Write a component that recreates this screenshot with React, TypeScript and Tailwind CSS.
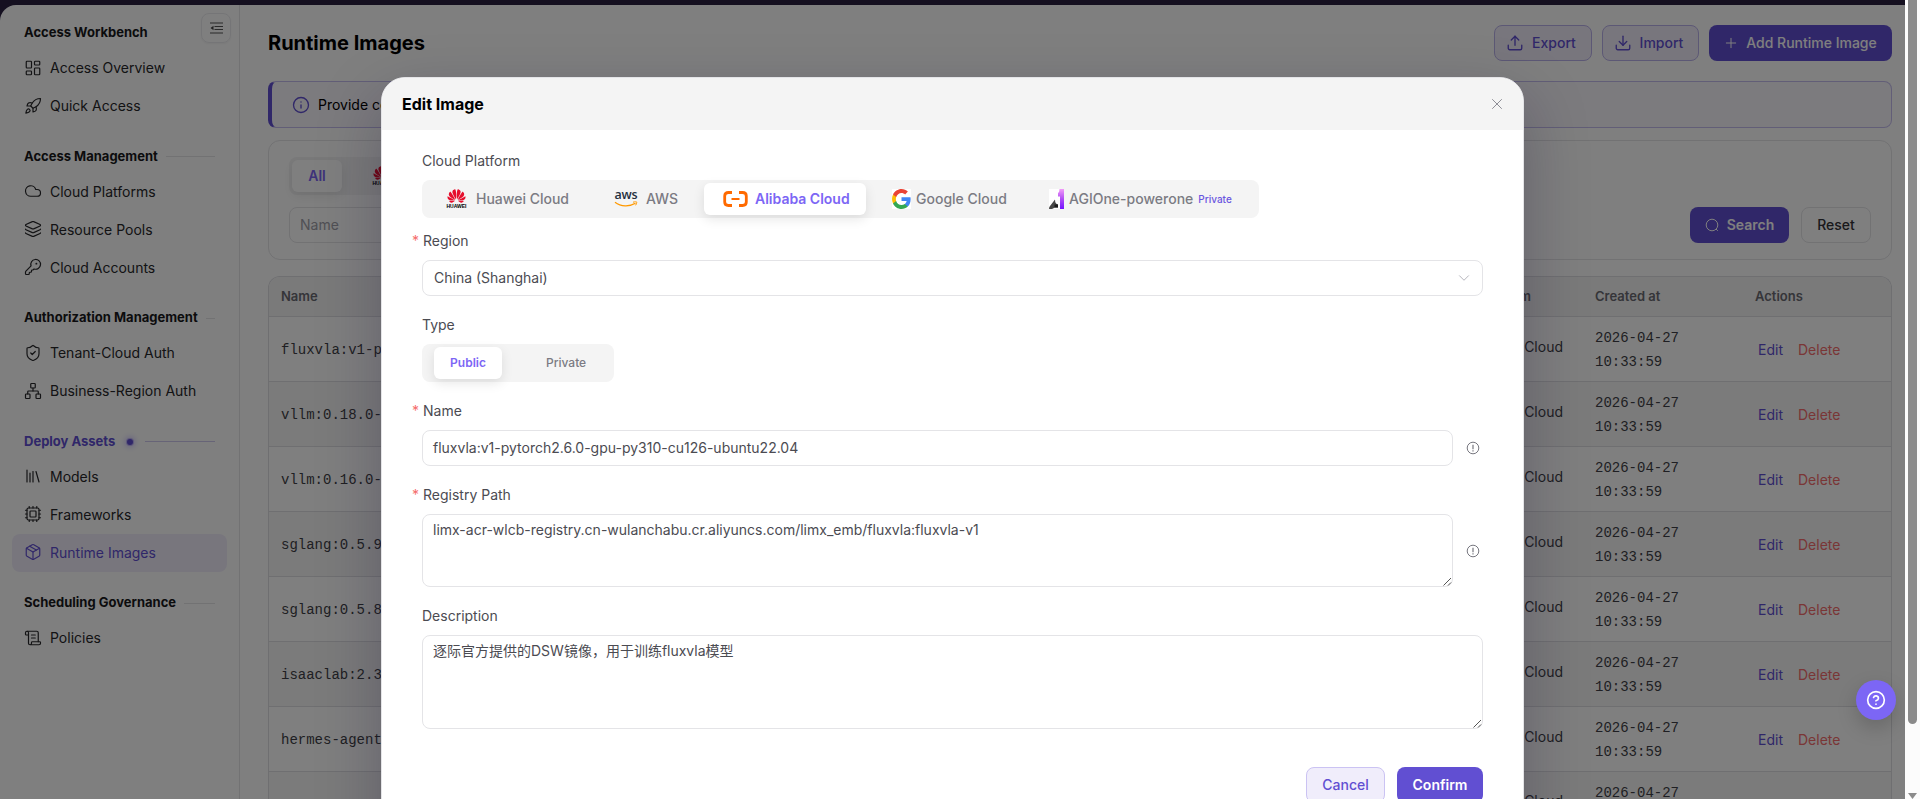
import React from "react";
import {
  LayoutDashboard, Rocket, Cloud, Layers, KeyRound, ShieldCheck, Network, Library, Cpu, Package, ScrollText,
  Upload, Download, Plus, Info, X, ChevronDown, CircleQuestionMark,
} from "lucide-react";
import { SiHuawei } from "react-icons/si";

type Item = { label: string; icon: React.ElementType; active?: boolean };
type Group = { title: string; active?: boolean; items: Item[] };

const groups: Group[] = [
  { title: "Access Workbench", items: [{ label: "Access Overview", icon: LayoutDashboard }, { label: "Quick Access", icon: Rocket }] },
  { title: "Access Management", items: [{ label: "Cloud Platforms", icon: Cloud }, { label: "Resource Pools", icon: Layers }, { label: "Cloud Accounts", icon: KeyRound }] },
  { title: "Authorization Management", items: [{ label: "Tenant-Cloud Auth", icon: ShieldCheck }, { label: "Business-Region Auth", icon: Network }] },
  { title: "Deploy Assets", active: true, items: [{ label: "Models", icon: Library }, { label: "Frameworks", icon: Cpu }, { label: "Runtime Images", icon: Package, active: true }] },
  { title: "Scheduling Governance", items: [{ label: "Policies", icon: ScrollText }] },
];

const names = ["fluxvla:v1-p", "vllm:0.18.0-", "vllm:0.16.0-", "sglang:0.5.9", "sglang:0.5.8", "isaaclab:2.3", "hermes-agent"];

function HuaweiLogo() {
  return (
    <span className="flex h-5 w-[19px] shrink-0 flex-col items-center">
      <SiHuawei className="-mt-0.5 h-[18px] w-[19px] text-[#e60f2d]" />
      <span className="-mt-px font-['Liberation_Sans'] text-[5px] leading-[5px] font-bold text-black">HUAWEI</span>
    </span>
  );
}

function AwsLogo() {
  return (
    <span className="flex h-5 w-6 shrink-0 flex-col items-center">
      <span className="font-['Open_Sans'] text-[12.5px] leading-[12px] font-semibold tracking-[-0.2px] text-[#252f3e]">aws</span>
      <svg viewBox="0 0 24 6" className="h-1.5 w-6" fill="none" stroke="#ff9900" strokeWidth="1.3">
        <path d="M1 1.2C7 5.8 15.500 5.800 21.500 2.200" />
        <path d="M19 1.200c2-.6 4-.5 3.800.1-.1.9-.5 2-1.200 3" strokeWidth="1" />
      </svg>
    </span>
  );
}

function AlibabaLogo() {
  return (
    <svg viewBox="0 0 25 16" className="h-4 w-[25px] shrink-0" fill="none" stroke="#ff6a00">
      <path d="M9 1.500H5.500Q1.700 1.500 1.700 5V11Q1.700 14.500 5.500 14.500H9" strokeWidth="2.800" />
      <path d="M16 1.500H19.500Q23.300 1.500 23.300 5V11Q23.300 14.500 19.500 14.500H16" strokeWidth="2.800" />
      <path d="M8.500 8H16.500" strokeWidth="2" />
    </svg>
  );
}

function GoogleLogo() {
  return (
    <span className="h-5 w-[19px] shrink-0 bg-white">
      <svg viewBox="1 1 22 22" preserveAspectRatio="none" className="h-5 w-[19px]">
        <path fill="#4285F4" d="M22.560 12.250c0-.78-.07-1.530-.2-2.250H12v4.260h5.920c-.26 1.370-1.040 2.530-2.210 3.310v2.770h3.570c2.080-1.920 3.280-4.740 3.280-8.090z" />
        <path fill="#34A853" d="M12 23c2.970 0 5.460-.98 7.280-2.660l-3.570-2.770c-.98.66-2.230 1.060-3.710 1.060-2.860 0-5.290-1.930-6.160-4.530H2.180v2.840C3.990 20.530 7.700 23 12 23z" />
        <path fill="#FBBC05" d="M5.840 14.090c-.22-.66-.35-1.360-.35-2.090s.13-1.430.35-2.090V7.070H2.180C1.430 8.550 1 10.220 1 12s.43 3.450 1.180 4.930l3.660-2.840z" />
        <path fill="#EA4335" d="M12 5.380c1.620 0 3.060.56 4.210 1.640l3.150-3.150C17.450 2.090 14.970 1 12 1 7.700 1 3.990 3.470 2.180 7.070l3.660 2.840c.87-2.600 3.300-4.530 6.160-4.530z" />
      </svg>
    </span>
  );
}

function AgiLogo() {
  return (
    <span className="h-5 w-[15px] shrink-0 bg-white">
      <svg viewBox="0 0 15 20" className="h-5 w-[15px]">
        <defs>
          <linearGradient id="one" x1="0" y1="0" x2="0" y2="1">
            <stop offset="0" stopColor="#f29bf8" />
            <stop offset=".5" stopColor="#b04bf5" />
            <stop offset="1" stopColor="#7414ff" />
          </linearGradient>
        </defs>
        <path d="M10.500 0H15V20H11V7.500H9V4Q10.500 3 10.500 0Z" fill="url(#one)" />
        <path d="M0 20Q0 18 1 17L6 10.500Q6 15 9 15.500V18.500H6L3 20Z" fill="#484848" />
        <path d="M5.500 15.500H9V18.500H5.500Z" fill="#1c1c1c" />
      </svg>
    </span>
  );
}

function FoldIcon() {
  return (
    <svg viewBox="0 0 13 12" className="h-3 w-[13px]" fill="none" stroke="#555" strokeWidth="1.500">
      <path d="M0 1H13M4.500 4.500H13M4.500 7.500H13M0 11H13" strokeWidth="1.200" />
      <path d="M3.500 3.800V8.200L.5 6Z" fill="#444" stroke="none" />
    </svg>
  );
}

function HintIcon() {
  return (
    <svg viewBox="0 0 14 14" className="h-3.5 w-3.5 shrink-0" fill="none" stroke="#77777f">
      <circle cx="7" cy="7" r="5.800" />
      <path d="M7 3.800V8.200M7 9.300V10.500" strokeWidth="1.200" />
    </svg>
  );
}

function Sidebar() {
  return (
    <aside className="relative w-60 shrink-0 border-r border-[#e4e4e7] px-3 pt-[18px]">
      <button className="absolute top-2 right-2 flex h-[30px] w-[30px] items-center justify-center rounded-lg border border-[#ebebee] shadow-xs">
        <FoldIcon />
      </button>
      {groups.map((g, i) => (
        <section key={g.title} className="mb-[21.500px]">
          <div className="flex h-5 items-center pr-3 pl-3">
            <h3 className={`text-[13px] font-bold whitespace-nowrap ${g.active ? "text-[#614fd2]" : "text-[#18181b]"}`}>{g.title}</h3>
            {g.active && <span className="ml-3 h-1.5 w-1.5 rounded-full bg-[#614fd2] shadow-[0_0_0_1px_#bdb3f5,0_0_6px_2px_#c9c0ff]" />}
            {i > 0 && <span className={`h-px flex-1 ${g.active ? "ml-3 bg-[#cfc8ef]" : "ml-2 bg-[#e4e4e7]"}`} />}
          </div>
          <div className="mt-1.5">
            {g.items.map(({ label, icon: Icon, active }) => (
              <a key={label} className={`flex h-[38px] items-center gap-2 rounded-lg px-3 text-sm whitespace-nowrap ${active ? "bg-[#f0edfb] text-[#614fd2]" : "text-[#27272a]"}`}>
                <Icon className="-mt-px h-[18px] w-[18px]" strokeWidth={1.6} />
                <span>{label}</span>
              </a>
            ))}
          </div>
        </section>
      ))}
    </aside>
  );
}

const outline = "flex h-9 items-center gap-2 rounded-lg border bg-[#f0edfb] text-sm font-medium text-[#614fd2]";
const solid = "flex h-9 items-center rounded-lg bg-[#614fd2] text-sm text-white";

function Main() {
  return (
    <main className="flex min-w-0 flex-1 flex-col pr-[13px] pl-7">
      <div className="mt-5 flex h-9 items-center gap-2.5">
        <h1 className="flex-1 text-xl font-bold text-black">Runtime Images</h1>
        <button className={`${outline} w-[98px] justify-center border-[#b9b0ea] pr-1`}><Upload className="h-[18px] w-[18px]" strokeWidth={1.8} />Export</button>
        <button className={`${outline} w-[97px] justify-center border-[#b9b0ea] pr-1`}><Download className="h-[18px] w-[18px]" strokeWidth={1.8} />Import</button>
        <button className={`${solid} w-[183px] justify-center gap-[7px] pr-px font-medium`}><Plus className="h-4 w-4" strokeWidth={1.5} />Add Runtime Image</button>
      </div>
      <div className="mt-5 flex h-[47px] shrink-0 items-center gap-2 rounded-lg border border-l-4 border-[#c5bdee] border-l-[#614fd2] bg-[#f8f7fd] pl-5 text-sm text-black">
        <Info className="h-[18px] w-[18px] text-[#614fd2]" strokeWidth={1.8} />
        <span className="whitespace-nowrap">Provide co</span>
      </div>
      <div className="mt-3 h-[120px] shrink-0 rounded-xl border border-[#e4e4e7] px-5 pt-4">
        <div className="flex h-[38px] w-[700px] items-center rounded-lg bg-[#f4f4f5] px-[3px]">
          <span className="flex h-8 w-[50px] items-center justify-center rounded-md bg-white text-sm font-semibold text-[#7c66f5] shadow-[0_4px_12px_rgba(0,0,0,0.08)]">All</span>
          <span className="ml-[31px]"><HuaweiLogo /></span>
        </div>
        <div className="mt-3 flex items-center justify-between">
          <div className="flex h-9 w-60 items-center rounded-lg border border-[#e4e4e7] px-2.5 text-sm text-[#a1a1aa]">Name</div>
          <div className="flex gap-3">
            <button className={`${solid} w-[99px] justify-center gap-2 font-semibold`}>
              <svg viewBox="0 0 14 14" className="h-3.5 w-3.5" fill="none" stroke="currentColor"><circle cx="7" cy="7" r="5.800" /><path d="m11 11 1.800 1.800" /></svg>
              Search
            </button>
            <button className="flex h-9 w-[70px] items-center justify-center rounded-lg border border-[#e4e4e7] text-sm font-medium text-[#333338]">Reset</button>
          </div>
        </div>
      </div>
      <div className="mt-4 min-h-0 flex-1 overflow-hidden rounded-t-xl border border-b-0 border-[#dedee2]">
        <div className="flex h-10 items-center border-b border-[#dedee2] bg-[#f4f4f5] text-[13px] font-semibold text-[#6b6b73]">
          <span className="w-[1100px] pl-3">Name</span>
          <span className="w-[162px] text-right">Cloud Platform</span>
          <span className="w-[160px] pl-[64px] whitespace-nowrap">Created at</span>
          <span className="pl-[64px]">Actions</span>
        </div>
        {names.map((n, i) => (
          <div key={n} className={`flex h-[65px] items-center border-b border-[#dedee2] text-sm ${i % 2 ? "bg-[#f6f6f7]" : ""}`}>
            <span className="w-[1100px] pt-0.5 pl-3 font-['Liberation_Mono',monospace] text-[#3f3f46]">{n}</span>
            <span className="w-[194px] pb-1 text-right text-[#3f3f46]">Alibaba Cloud</span>
            <span className="w-[128px] pt-px pl-8 font-['Liberation_Mono',monospace] leading-6 text-[#3f3f46]">2026-04-27 10:33:59</span>
            <span className="flex gap-[15px] pt-0.5 pl-[67px]">
              <a className="text-[#614fd2]">Edit</a>
              <a className="text-[#f56c6c]">Delete</a>
            </span>
          </div>
        ))}
        <div className="flex h-[65px] bg-[#f6f6f7] pt-[9px] text-sm text-[#3f3f46]">
          <span className="w-[1294px] pt-2.5 text-right">Alibaba Cloud</span>
          <span className="pl-8 font-['Liberation_Mono',monospace] leading-6">2026-04-27</span>
        </div>
      </div>
    </main>
  );
}

function Label({ children, required }: { children: string; required?: boolean }) {
  return (
    <label className={`flex h-[22px] items-center text-sm text-[#4b4b52] ${required ? "-ml-2.5" : ""}`}>
      {required && <span className="mr-1 w-[7px] text-[#f56c6c]">*</span>}
      {children}
    </label>
  );
}

const field = "rounded-lg border border-[#e4e4e7] text-sm text-[#4b4b52]";

function Grip() {
  return (
    <svg viewBox="0 0 9 9" className="absolute right-0 bottom-0 h-[9px] w-[9px]" stroke="#555" strokeWidth="1" fill="none">
      <path d="M.5 8.500 8 1M5 8.500 8 5.500" />
    </svg>
  );
}

function Modal() {
  return (
    <div role="dialog" className="absolute top-[77px] left-[381px] h-[780px] w-[1143px] overflow-hidden rounded-3xl border border-[#e4e4e7] bg-white shadow-[0_24px_64px_rgba(20,16,50,0.28)]">
      <header className="flex h-[52px] items-center justify-between bg-[#f4f4f4] pr-[17px] pl-5">
        <h2 className="text-base font-bold text-black">Edit Image</h2>
        <X className="h-[18px] w-[18px] text-[#8b8b93]" strokeWidth={1.3} />
      </header>
      <div className="px-10 pt-5">
        <Label>Cloud Platform</Label>
        <div className="mt-2 flex h-[38px] w-[837px] items-center rounded-lg bg-[#f4f4f4] text-sm font-medium whitespace-nowrap text-[#7b7b83]">
          <span className="flex w-48 items-center gap-2.5 pl-[25px]"><HuaweiLogo />Huawei Cloud</span>
          <span className="flex w-[90px] items-center gap-2"><AwsLogo />AWS</span>
          <span className="flex h-8 w-[162px] items-center gap-[7px] rounded-md bg-white pl-[19px] font-semibold text-[#7c66f5] shadow-[0_4px_12px_rgba(0,0,0,0.1)]"><AlibabaLogo />Alibaba Cloud</span>
          <span className="flex w-[183px] items-center gap-[5px] pl-[26px]"><GoogleLogo />Google Cloud</span>
          <span className="flex items-center gap-[5px]"><AgiLogo />AGIOne-powerone <span className="text-[10px] text-[#6a55e0]">Private</span></span>
        </div>
        <div className="mt-3"><Label required>Region</Label></div>
        <div className={`${field} mt-2 flex h-9 items-center justify-between pr-[9px] pl-[11px]`}>
          <span>China (Shanghai)</span>
          <ChevronDown className="h-[18px] w-[18px] text-[#b4b4bb]" strokeWidth={1.3} />
        </div>
        <div className="mt-[18px]"><Label>Type</Label></div>
        <div className="mt-2 flex h-[38px] w-48 items-center rounded-lg bg-[#f4f4f4] pl-3 text-xs font-medium text-[#7b7b83]">
          <span className="flex h-8 w-[68px] items-center justify-center rounded-md bg-white font-semibold text-[#7c66f5] shadow-[0_4px_12px_rgba(0,0,0,0.1)]">Public</span>
          <span className="ml-11">Private</span>
        </div>
        <div className="mt-[18px]"><Label required>Name</Label></div>
        <div className="mt-2 flex items-center gap-[13px]">
          <div className={`${field} flex h-9 w-[1031px] items-center px-2.5`}>fluxvla:v1-pytorch2.6.0-gpu-py310-cu126-ubuntu22.04</div>
          <HintIcon />
        </div>
        <div className="mt-[18px]"><Label required>Registry Path</Label></div>
        <div className="mt-2 flex items-center gap-[13px]">
          <div className={`${field} relative h-[73px] w-[1031px] px-2.5 pt-[5px]`}>limx-acr-wlcb-registry.cn-wulanchabu.cr.aliyuncs.com/limx_emb/fluxvla:fluxvla-v1<Grip /></div>
          <HintIcon />
        </div>
        <div className="mt-[18px]"><Label>Description</Label></div>
        <div className={`${field} relative mt-2 h-[94px] px-2.5 pt-[5px]`}>逐际官方提供的DSW镜像，用于训练fluxvla模型<Grip /></div>
        <div className="mt-[38px] flex justify-end gap-3">
          <button className={`${outline} w-[79px] justify-center border-[#cbc3f3]`}>Cancel</button>
          <button className={`${solid} w-[86px] justify-center font-semibold`}>Confirm</button>
        </div>
      </div>
    </div>
  );
}

export default function App() {
  return (
    <div className="flex h-[799px] w-[1920px] overflow-hidden bg-white font-[Inter,'Noto_Sans_CJK_SC',sans-serif]">
      <div className="relative h-full w-[1905px] overflow-hidden bg-[#2a2140] pt-[5px]">
        <div className="flex h-[794px] rounded-tl-2xl bg-white">
          <Sidebar />
          <Main />
        </div>
        <div className="absolute inset-0 bg-black/50" />
        <Modal />
        <button className="absolute top-[680px] right-[9px] flex h-10 w-10 items-center justify-center rounded-full bg-[#7c66f5] text-white shadow-[0_8px_20px_rgba(0,0,0,0.18)]">
          <CircleQuestionMark className="h-5 w-5" />
        </button>
      </div>
      <div className="flex flex-1 flex-col justify-between bg-[#fcfcfc] pl-[3px]">
        <div className="h-[724px] w-[9px] rounded-b-full bg-[#8b8b8b]" />
        <svg viewBox="0 0 9 6" className="h-1.5 w-[9px]"><path d="M0 0H9L4.500 6Z" fill="#8b8b8b" /></svg>
      </div>
    </div>
  );
}
